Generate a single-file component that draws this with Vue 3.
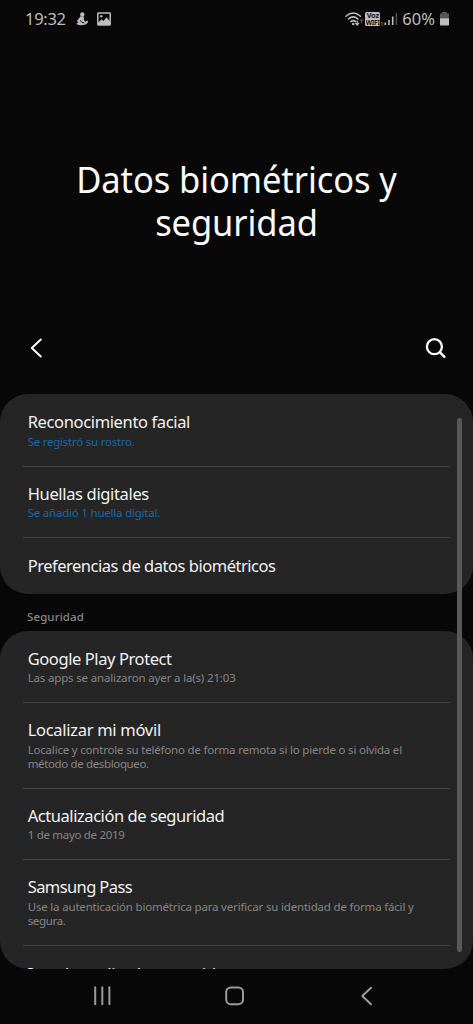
<script setup>
const biometrics = [
  { title: 'Reconocimiento facial', ts: -0.36, lines: [{ text: 'Se registró su rostro.', s: -0.24 }] },
  { title: 'Huellas digitales', ts: -0.35, lines: [{ text: 'Se añadió 1 huella digital.', s: -0.21 }] },
  { title: 'Preferencias de datos biométricos', ts: -0.48, lines: [] }
]
const security = [
  { title: 'Google Play Protect', ts: -0.41, lines: [{ text: 'Las apps se analizaron ayer a la(s) 21:03', s: -0.165 }] },
  {
    title: 'Localizar mi móvil', ts: -0.29,
    lines: [
      { text: 'Localice y controle su teléfono de forma remota si lo pierde o si olvida el', s: -0.195 },
      { text: 'método de desbloqueo.', s: -0.36 }
    ]
  },
  { title: 'Actualización de seguridad', ts: -0.44, lines: [{ text: '1 de mayo de 2019', s: -0.3 }] },
  {
    title: 'Samsung Pass', ts: -0.6,
    lines: [
      { text: 'Use la autenticación biométrica para verificar su identidad de forma fácil y', s: -0.185 },
      { text: 'segura.', s: -0.35 }
    ]
  },
  { title: 'Instalar aplic. desconocidas', ts: -0.3, lines: [] }
]
const spacing = (v) => ({ letterSpacing: v + 'px' })
</script>

<template>
  <div class="screen">
    <header class="status">
      <span class="clock">19:32</span>
      <svg class="figure" width="14" height="16" viewBox="0 0 14 16">
        <circle cx="7.3" cy="3.4" r="2.2" />
        <path d="M5.6 5.2 8.8 5.4 9 9.2 10.3 10.8 12.6 9.6 13 11.4 10.6 13.6 7 14.2 3.2 14 1.4 12.4 3.6 11.6 1.8 10.2 3.4 8Z" />
        <path class="cut" d="M5.2 9.2 7 11.4 9.4 12" />
      </svg>
      <svg class="photo" width="14" height="14" viewBox="0 0 14 14">
        <rect x=".8" y=".9" width="12.4" height="12" rx=".6" />
        <path d="M1 11 4.5 7.2 6.4 9.1 9.6 5.2 13 9.6V13H1Z" />
        <circle cx="4.3" cy="4.3" r="1.2" />
      </svg>
      <span class="grow"></span>
      <svg class="wifi" width="19" height="16" viewBox="0 0 19 16">
        <path d="M1 5.3Q8.2-1.2 15.4 5.3M3.4 8Q8.2 3.8 13 8M5.8 10.6Q8.2 8.6 10.6 10.6" />
        <circle cx="8.2" cy="13" r="1.3" />
        <path class="arrow" d="M12.2 9.8V13.6M10.7 12.3 12.2 14 13.7 12.3" />
        <path class="up" d="M16.6 12.2V8.2M15.1 9.8 16.6 8.1 18.1 9.8" />
      </svg>
      <span class="voz">
        <b>Voz</b>
        <b>WIFI</b>
        <i>1</i>
      </span>
      <svg class="signal" width="14" height="14" viewBox="0 0 14 14">
        <path d="M1.3 13V10.6M5 13V8M8.7 13V4.6" />
        <path class="dim" d="M12.4 13V1" />
      </svg>
      <span class="percent">60%</span>
      <svg class="battery" width="11" height="14" viewBox="0 0 11 14">
        <path class="empty" d="M3 0H8V1.4H10V6.5H1V1.4H3Z" />
        <path d="M1 6.3H10V12.4Q10 13.6 8.8 13.6H2.2Q1 13.6 1 12.4Z" />
      </svg>
    </header>

    <h1 class="heading">Datos biométricos y<br />seguridad</h1>

    <nav class="toolbar">
      <svg width="14" height="22" viewBox="0 0 14 22"><path d="M11.8 2.5 2.8 11 11.8 19.5" /></svg>
      <svg width="24" height="24" viewBox="0 0 24 24"><circle cx="10.4" cy="10.7" r="7.5" /><path class="handle" d="M16 16.4 20.4 20.8" /></svg>
    </nav>

    <main class="list">
      <section class="card">
        <div v-for="row in biometrics" :key="row.title" class="row linked">
          <h2><span :style="spacing(row.ts)">{{ row.title }}</span></h2>
          <p v-for="line in row.lines" :key="line.text" :style="spacing(line.s)">{{ line.text }}</p>
        </div>
      </section>
      <h3 class="group">Seguridad</h3>
      <section class="card long">
        <div v-for="row in security" :key="row.title" class="row">
          <h2><span :style="spacing(row.ts)">{{ row.title }}</span></h2>
          <p v-for="line in row.lines" :key="line.text" :style="spacing(line.s)">{{ line.text }}</p>
        </div>
      </section>
      <div class="scrollbar"></div>
    </main>

    <footer class="keys">
      <svg width="20" height="20" viewBox="0 0 20 20"><path d="M2.2 1.3V18.3M9.3 1.3V18.3M16.4 1.3V18.3" /></svg>
      <svg width="20" height="20" viewBox="0 0 20 20"><rect x="1.2" y="1.4" width="16.8" height="16.8" rx="4.6" /></svg>
      <svg width="20" height="20" viewBox="0 0 20 20"><path d="M14 1.8 5.3 10 14 18.2" /></svg>
    </footer>
  </div>
</template>

<style>
html, body { background: #080808; }
</style>

<style scoped>
.screen {
  width: 473px;
  height: 1024px;
  display: flex;
  flex-direction: column;
  overflow: hidden;
  background: #080808;
  color: #f2f2f2;
  font-family: "Noto Sans", sans-serif;
}
h1, h2, h3, p { margin: 0; font-weight: 400; }
svg { display: block; flex: none; }

.status {
  height: 37px;
  box-sizing: border-box;
  padding: 0 23px 0 25px;
  display: flex;
  align-items: center;
  color: #bdbdbd;
  font-size: 16.5px;
  line-height: 22px;
}
.status svg { fill: #bdbdbd; }
.clock { width: 50px; letter-spacing: -.3px; }
.figure .cut { fill: none; stroke: #080808; stroke-width: .9; }
.photo { margin-left: 8px; }
.status .photo rect { fill: none; stroke: #bdbdbd; stroke-width: 1.5; }
.grow { flex: 1; }
.status .wifi path { fill: none; stroke: #bdbdbd; stroke-width: 1.5; stroke-linecap: round; }
.status .wifi .arrow { stroke-width: 1.2; }
.status .wifi .up { stroke: #555; stroke-width: 1; }
.voz {
  position: relative;
  width: 15px;
  height: 14px;
  margin: 0 4px 0 1px;
  display: flex;
  flex-direction: column;
  align-items: center;
  background: #bdbdbd;
  color: #111;
  border-radius: 1.5px;
}
.voz b { font-size: 7.5px; line-height: 7px; letter-spacing: -.35px; }
.voz b + b { font-size: 6.5px; letter-spacing: -.2px; }
.voz i { position: absolute; right: -3px; bottom: -1px; font: 5px/6px "Noto Sans", sans-serif; color: #bdbdbd; }
.status .signal path { fill: none; stroke: #bdbdbd; stroke-width: 1.6; }
.status .signal .dim { stroke: #4a4a4a; }
.percent { margin: 0 4px 0 4px; letter-spacing: .05px; }
.status .battery .empty { fill: #555; }

.heading {
  height: 271.5px;
  box-sizing: border-box;
  padding-top: 120.5px;
  text-align: center;
  font-size: 36px;
  line-height: 43.5px;
  letter-spacing: -.1px;
  color: #fafafa;
  white-space: nowrap;
  transform: scaleX(.959);
}

.toolbar {
  height: 85.5px;
  box-sizing: border-box;
  padding: 0 25px 6px 29px;
  display: flex;
  align-items: center;
  justify-content: space-between;
}
.toolbar svg { fill: none; stroke: #fafafa; stroke-width: 2; stroke-linecap: round; stroke-linejoin: round; }
.toolbar circle { stroke-width: 2.3; }
.toolbar .handle { stroke-width: 2.5; }

.list { position: relative; height: 574.5px; flex: none; overflow: hidden; }
.card { box-sizing: border-box; height: 200px; padding-top: 1px; background: #252525; border-radius: 28px; overflow: hidden; }
.long { height: 338px; }
.row { position: relative; padding: 16px 23px 18px 27.7px; }
.row:last-child { padding-top: 17px; }
.row + .row::before { content: ""; position: absolute; left: 23px; right: 23px; top: -1px; height: 1.4px; background: #444; }
.row h2 { font-size: 16.5px; line-height: 22px; margin-bottom: 1.5px; white-space: nowrap; }
.row p { font-size: 11.5px; line-height: 14px; color: #858585; white-space: nowrap; }
.linked p { color: #1668ac; }
.group { height: 36.5px; padding: 16px 0 0 27px; box-sizing: border-box; font-size: 11.5px; line-height: 14px; font-weight: 500; letter-spacing: .1px; color: #868686; }
.scrollbar { position: absolute; left: 457px; top: 23.5px; width: 5px; height: 534px; border-radius: 2px; background: #585858; }

.keys { flex: 1; display: flex; justify-content: space-between; align-items: center; padding: 0 96px 1px 92.5px; }
.keys svg { fill: none; stroke: #9a9a9a; stroke-width: 2; stroke-linecap: round; stroke-linejoin: round; }
</style>
